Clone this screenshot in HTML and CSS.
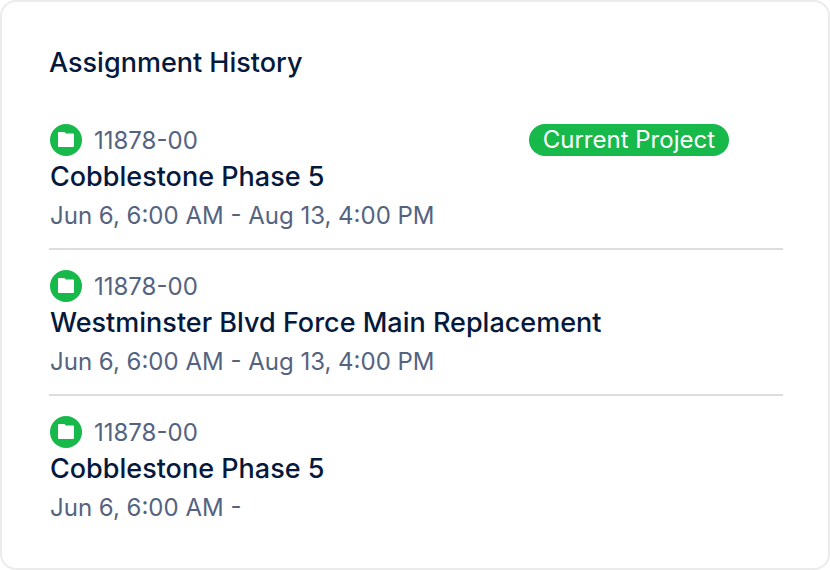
FILE: index.html
```html
<!DOCTYPE html>
<html lang="en">
<head>
  <meta charset="UTF-8" />
  <meta name="viewport" content="width=device-width, initial-scale=1.0"/>
  <title>Assignment History</title>
  <link rel="stylesheet" href="styles.css">
</head>
<body>
  <section class="card">
    <h1>Assignment History</h1>

    <ul class="history">
      <li class="assignment">
        <div class="meta">
          <svg class="project-icon" viewBox="0 0 32 32" aria-hidden="true">
            <circle cx="16" cy="16" r="16" fill="#18b94b"/>
            <path d="M9 8h5.500l1.200 1.500h7.300a1 1 0 0 1 1 1v11.500a1 1 0 0 1-1 1h-14a1 1 0 0 1-1-1v-13a1 1 0 0 1 1-1z" fill="#fff"/>
          </svg>
          <span class="code">11878-00</span>
          <span class="badge">Current Project</span>
        </div>
        <h2>Cobblestone Phase 5</h2>
        <p class="dates">Jun 6, 6:00 AM - Aug 13, 4:00 PM</p>
      </li>

      <li class="assignment">
        <div class="meta">
          <svg class="project-icon" viewBox="0 0 32 32" aria-hidden="true">
            <circle cx="16" cy="16" r="16" fill="#18b94b"/>
            <path d="M9 8h5.500l1.200 1.500h7.300a1 1 0 0 1 1 1v11.500a1 1 0 0 1-1 1h-14a1 1 0 0 1-1-1v-13a1 1 0 0 1 1-1z" fill="#fff"/>
          </svg>
          <span class="code">11878-00</span>
        </div>
        <h2>Westminster Blvd Force Main Replacement</h2>
        <p class="dates">Jun 6, 6:00 AM - Aug 13, 4:00 PM</p>
      </li>

      <li class="assignment">
        <div class="meta">
          <svg class="project-icon" viewBox="0 0 32 32" aria-hidden="true">
            <circle cx="16" cy="16" r="16" fill="#18b94b"/>
            <path d="M9 8h5.500l1.200 1.500h7.300a1 1 0 0 1 1 1v11.500a1 1 0 0 1-1 1h-14a1 1 0 0 1-1-1v-13a1 1 0 0 1 1-1z" fill="#fff"/>
          </svg>
          <span class="code">11878-00</span>
        </div>
        <h2>Cobblestone Phase 5</h2>
        <p class="dates">Jun 6, 6:00 AM -</p>
      </li>
    </ul>
  </section>
</body>
</html>
```

FILE: styles.css
```css
* {
  box-sizing: border-box;
}

body {
  margin: 0;
  font-family: Inter, sans-serif;
  background: #fff;
  color: #04193b;
}

.card {
  min-height: 100vh;
  padding: 42px 45px 24px 47px;
  border: 2px solid #ebebec;
  border-radius: 16px;
}

h1, h2 {
  margin: 0;
  font-size: 27px;
  font-weight: 500;
  line-height: 38px;
}

h2 {
  padding: 2px 0 0 1px;
}

.history {
  list-style: none;
  margin: 22px 0 0;
  padding: 0;
}

.assignment {
  padding: 20px 0 12px;
}

.assignment + .assignment {
  border-top: 2px solid #dcdddf;
}

.meta {
  display: flex;
  align-items: center;
  padding: 0 54px 0 1px;
}

.project-icon {
  width: 32px;
  height: 32px;
  margin-right: 12px;
}

.code, .dates {
  font-size: 24px;
  color: #54637f;
}

.badge {
  margin-left: auto;
  padding: 0 14px;
  border-radius: 16px;
  background: #18b94b;
  color: #fff;
  font-size: 24px;
  line-height: 32px;
}

.dates {
  margin: 0;
  padding-left: 1px;
  line-height: 40px;
}
```
